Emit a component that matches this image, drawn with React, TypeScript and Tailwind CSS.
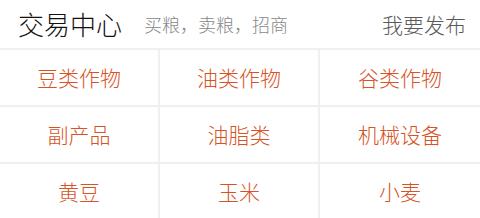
import React from "react";

const items = [
  "豆类作物",
  "油类作物",
  "谷类作物",
  "副产品",
  "油脂类",
  "机械设备",
  "黄豆",
  "玉米",
  "小麦",
];

export default function App() {
  return (
    <div
      className="w-[480px] h-[218px] overflow-hidden bg-white"
      style={{ fontFamily: '"Noto Sans CJK SC", "Noto Sans", sans-serif' }}
    >
      <div className="flex h-[50px] items-center border-b-2 border-[#f0f0f0] pl-[18px] pr-[14px]">
        <span className="text-[26px] font-light leading-none text-[#111]">交易中心</span>
        <span className="ml-[22px] text-[18px] font-light leading-none text-[#888]">
          买粮，卖粮，招商
        </span>
        <span className="ml-auto text-[21px] font-light leading-none text-[#5a5a5a]">
          我要发布
        </span>
      </div>
      <div className="grid grid-cols-3">
        {items.map((item, i) => (
          <div
            key={item}
            className={`flex h-[57px] items-center justify-center border-b-2 border-[#f0f0f0] text-[21px] font-light text-[#d65326] ${
              i % 3 !== 2 ? "border-r-2" : ""
            }`}
          >
            {item}
          </div>
        ))}
      </div>
    </div>
  );
}
